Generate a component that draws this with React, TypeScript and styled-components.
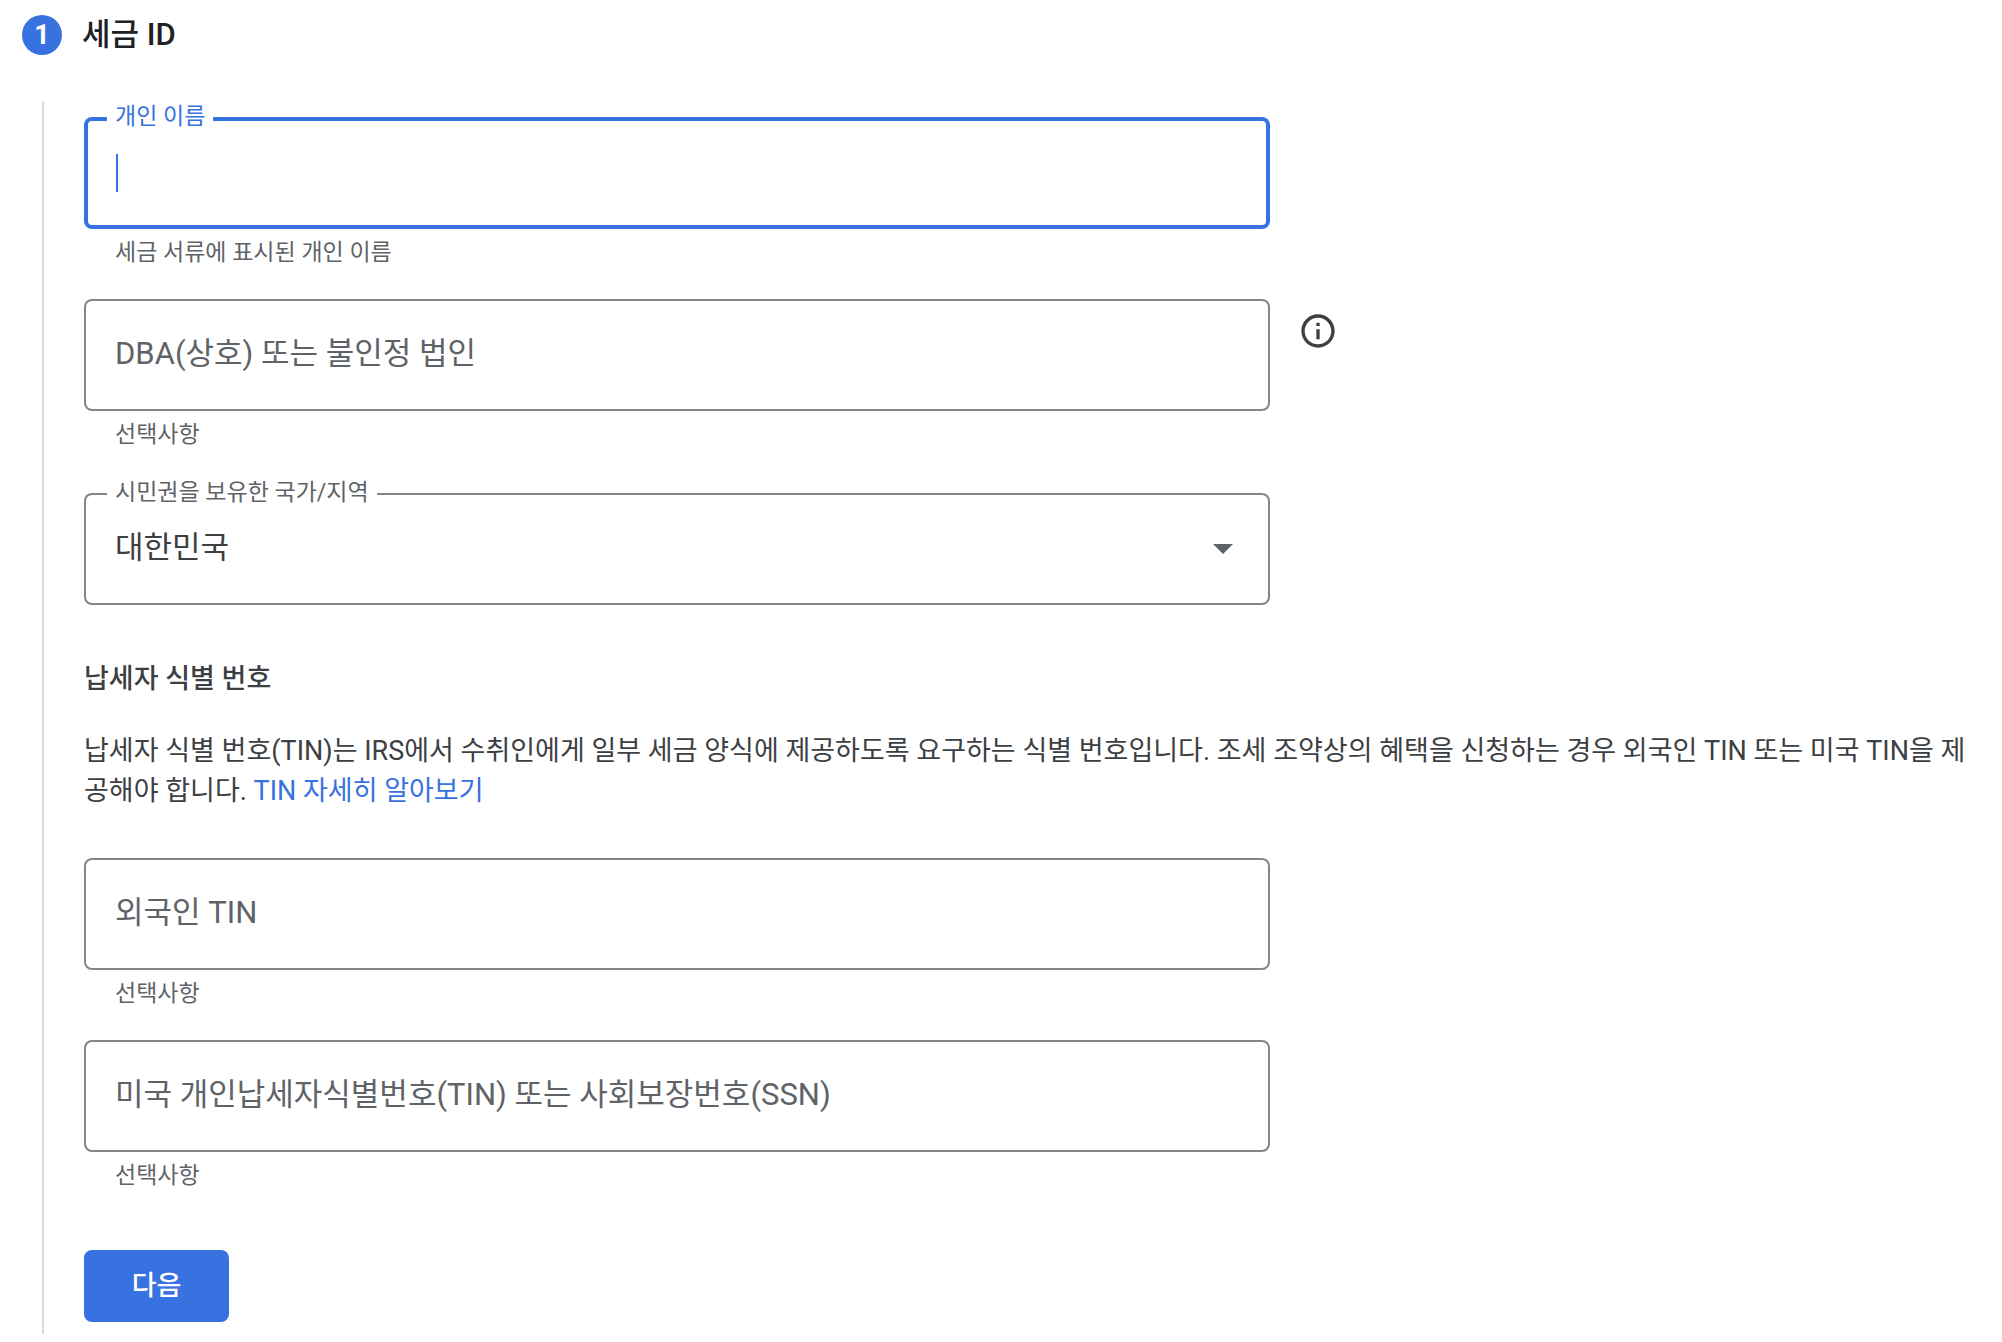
import React from "react";
import styled, { createGlobalStyle } from "styled-components";

const color = {
  blue: "#3871e0",
  ink: "#202124",
  text: "#3c4043",
  muted: "#5f6368",
  outline: "#80868b",
  rule: "#dadce0",
};

const GlobalStyle = createGlobalStyle`
  *, *::before, *::after { box-sizing: border-box; }
  body {
    margin: 0;
    background: #fff;
    color: ${color.text};
    font-family: Roboto, "Noto Sans CJK KR", sans-serif;
    font-size: 27px;
    line-height: 40px;
  }
  input, select, button { font: inherit; color: inherit; }
`;

const Page = styled.main`
  padding: 12px 22px 7px;
`;

const StepHeader = styled.header`
  display: flex;
  align-items: center;
  gap: 20px;
  height: 46px;
`;

const StepNumber = styled.span`
  display: grid;
  place-items: center;
  width: 40px;
  height: 40px;
  border-radius: 50%;
  background: ${color.blue};
  color: #fff;
  font-size: 27px;
  font-weight: 700;
`;

const StepTitle = styled.h2`
  margin: 0;
  color: ${color.ink};
  font-size: 31px;
  font-weight: 500;
`;

const StepBody = styled.form`
  margin: 43px 0 0 20px;
  padding: 16px 0 12px 40px;
  border-left: 2px solid ${color.rule};
`;

const FieldRow = styled.div`
  display: flex;
  align-items: flex-start;
  gap: 28px;
`;

const FieldColumn = styled.div<{ $gap: number }>`
  flex: 0 1 1186px;
  min-width: 0;
  margin-bottom: ${(p) => p.$gap}px;
`;

const Outline = styled.div<{ $active?: boolean }>`
  position: relative;
  display: grid;
  align-items: center;
  height: 112px;
  border-radius: 8px;
  box-shadow: inset 0 0 0 ${(p) => (p.$active ? `4px ${color.blue}` : `2px ${color.outline}`)};

  & > * { grid-area: 1 / 1; }
`;

const TextInput = styled.input`
  width: 100%;
  height: 100%;
  padding: 0 31px;
  border: 0;
  outline: 0;
  background: transparent;
  font-size: 31px;
  caret-color: ${color.blue};
`;

const SelectInput = styled.select`
  width: 100%;
  height: 100%;
  padding: 0 72px 2px 31px;
  border: 0;
  outline: 0;
  background: transparent;
  appearance: none;
  font-size: 31px;
`;

const RestingLabel = styled.label`
  justify-self: start;
  margin-left: 31px;
  padding-bottom: 2px;
  color: ${color.muted};
  font-size: 31px;
  pointer-events: none;

  ${TextInput}:not(:placeholder-shown) + & { visibility: hidden; }
`;

const FloatingLabel = styled.label<{ $active?: boolean }>`
  position: absolute;
  top: -14px;
  left: 23px;
  padding: 0 8px;
  background: #fff;
  color: ${(p) => (p.$active ? color.blue : color.muted)};
  font-size: 23px;
  line-height: 28px;
`;

const Caret = styled.span`
  width: 2px;
  height: 38px;
  margin-left: 32px;
  background: ${color.blue};
  pointer-events: none;

  ${TextInput}:focus + &,
  ${TextInput}:not(:placeholder-shown) + & { display: none; }
`;

const Arrow = styled.svg`
  justify-self: end;
  width: 20px;
  height: 10px;
  margin-right: 37px;
  fill: ${color.muted};
  pointer-events: none;
`;

const Helper = styled.p`
  margin: 0;
  padding: 8px 31px 0;
  color: ${color.muted};
  font-size: 23px;
  line-height: 32px;
`;

const IconButton = styled.button`
  display: grid;
  flex: none;
  margin-top: 12px;
  padding: 0;
  border: 0;
  background: none;
  color: ${color.text};
  cursor: pointer;

  svg { width: 40px; height: 40px; fill: currentColor; }
`;

const SectionTitle = styled.h3`
  margin: 0 0 32px;
  font-size: 27px;
  font-weight: 500;
`;

const Paragraph = styled.p`
  margin: 0 0 47px;
  word-break: break-all;
`;

const Link = styled.a`
  color: ${color.blue};
  text-decoration: none;
`;

const NextButton = styled.button`
  display: block;
  min-width: 145px;
  height: 72px;
  margin-top: 58px;
  padding: 0 40px;
  border: 0;
  border-radius: 8px;
  background: ${color.blue};
  color: #fff;
  font-weight: 500;
  cursor: pointer;
`;

type FieldProps = {
  id: string;
  label: string;
  helper: string;
  gap?: number;
  active?: boolean;
  children?: React.ReactNode;
};

function TextField({ id, label, helper, gap = 30, active, children }: FieldProps) {
  return (
    <FieldRow>
      <FieldColumn $gap={gap}>
        <Outline $active={active}>
          <TextInput id={id} type="text" placeholder=" " aria-describedby={`${id}-help`} />
          {active ? (
            <>
              <Caret />
              <FloatingLabel htmlFor={id} $active>{label}</FloatingLabel>
            </>
          ) : (
            <RestingLabel htmlFor={id}>{label}</RestingLabel>
          )}
        </Outline>
        <Helper id={`${id}-help`}>{helper}</Helper>
      </FieldColumn>
      {children}
    </FieldRow>
  );
}

export default function App() {
  return (
    <>
      <GlobalStyle />
      <Page lang="ko">
        <StepHeader>
          <StepNumber>1</StepNumber>
          <StepTitle>세금 ID</StepTitle>
        </StepHeader>
        <StepBody onSubmit={(e) => e.preventDefault()}>
          <TextField id="name" label="개인 이름" helper="세금 서류에 표시된 개인 이름" active />
          <TextField id="dba" label="DBA(상호) 또는 불인정 법인" helper="선택사항" gap={42}>
            <IconButton type="button" aria-label="정보">
              <svg viewBox="0 0 24 24" aria-hidden="true">
                <path d="M11 7h2v2h-2zm0 4h2v6h-2zm1-9C6.48 2 2 6.48 2 12s4.48 10 10 10 10-4.48 10-10S17.52 2 12 2zm0 18c-4.41 0-8-3.59-8-8s3.59-8 8-8 8 3.59 8 8-3.59 8-8 8z" />
              </svg>
            </IconButton>
          </TextField>
          <FieldRow>
            <FieldColumn $gap={54}>
              <Outline>
                <SelectInput id="country" defaultValue="KR">
                  <option value="KR">대한민국</option>
                </SelectInput>
                <Arrow viewBox="0 0 20 10" aria-hidden="true">
                  <path d="M0 0h20L10 10z" />
                </Arrow>
                <FloatingLabel htmlFor="country">시민권을 보유한 국가/지역</FloatingLabel>
              </Outline>
            </FieldColumn>
          </FieldRow>
          <SectionTitle>납세자 식별 번호</SectionTitle>
          <Paragraph>
            납세자 식별 번호(TIN)는 IRS에서 수취인에게 일부 세금 양식에 제공하도록 요구하는 식별 번호입니다. 조세 조약상의 혜택을 신청하는 경우 외국인 TIN 또는 미국 TIN을 제공해야 합니다.{" "}
            <Link href="#tin">TIN 자세히 알아보기</Link>
          </Paragraph>
          <TextField id="foreign-tin" label="외국인 TIN" helper="선택사항" />
          <TextField id="us-tin" label="미국 개인납세자식별번호(TIN) 또는 사회보장번호(SSN)" helper="선택사항" gap={0} />
          <NextButton type="submit">다음</NextButton>
        </StepBody>
      </Page>
    </>
  );
}
